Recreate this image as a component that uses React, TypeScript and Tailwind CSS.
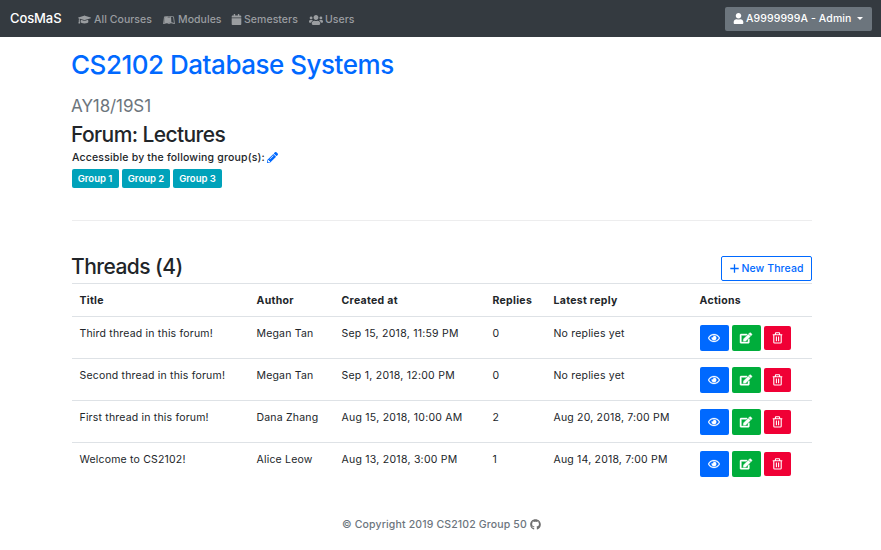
import React from "react";
import { FaGraduationCap, FaLeanpub, FaCalendar, FaUsers, FaUser, FaPencilAlt, FaRegEye, FaEdit, FaGithub } from "react-icons/fa";

const threads = [
  ["Third thread in this forum!", "Megan Tan", "Sep 15, 2018, 11:59 PM", "0", "No replies yet"],
  ["Second thread in this forum!", "Megan Tan", "Sep 1, 2018, 12:00 PM", "0", "No replies yet"],
  ["First thread in this forum!", "Dana Zhang", "Aug 15, 2018, 10:00 AM", "2", "Aug 20, 2018, 7:00 PM"],
  ["Welcome to CS2102!", "Alice Leow", "Aug 13, 2018, 3:00 PM", "1", "Aug 14, 2018, 7:00 PM"],
];

const columns = "grid grid-cols-[177px_85px_151px_61px_146px_112px]";

function TrashIcon() {
  return (
    <svg width="11" height="12" viewBox="0 0 11 12" fill="none" stroke="currentColor" strokeWidth="1.1">
      <path d="M0.7 2.7H10.3M3.4 2.5V1.4Q3.4 0.8 4 0.8H7Q7.6 0.8 7.6 1.4V2.5M1.8 2.7V10.2Q1.8 11 2.6 11H8.4Q9.2 11 9.2 10.2V2.7M4.4 4.6V9.2M6.6 4.6V9.2" />
    </svg>
  );
}

function PlusIcon() {
  return (
    <svg width="9" height="9" viewBox="0 0 9 9" fill="none" stroke="currentColor" strokeWidth="1.3">
      <path d="M4.5 0.3V8.7M0.3 4.5H8.7" />
    </svg>
  );
}

export default function App() {
  return (
    <div className="h-[550px] overflow-hidden bg-white font-['Inter',sans-serif] text-[10.5px] text-[#212529]">
      <nav className="flex h-[37px] items-center bg-[#343a40] pl-[10px] pr-[9px] font-medium text-[#9a9da0]">
        <span className="w-[68px] text-[13px] tracking-[-0.1px] text-white">CosMaS</span>
        <div className="flex flex-1 items-center pt-[2px] tracking-[0.05px]">
          <span className="flex w-[85px] items-center gap-[3px]"><FaGraduationCap size={13} />All Courses</span>
          <span className="flex w-[68px] items-center gap-[3px]"><FaLeanpub size={12} />Modules</span>
          <span className="flex w-[78px] items-center gap-[2px]"><FaCalendar size={11} />Semesters</span>
          <span className="flex items-center gap-[2px]"><FaUsers size={14} />Users</span>
        </div>
        <button className="flex h-6 w-[147px] items-center rounded-[2px] bg-[#6c757d] pl-2 text-white">
          <FaUser size={11} className="mr-[2px]" />
          <span className="tracking-[0.1px]">A9999999A - Admin</span>
          <span className="ml-[6px] border-x-[3.5px] border-t-[3.5px] border-x-transparent border-t-white" />
        </button>
      </nav>

      <main className="ml-[72px] w-[740px]">
        <h1 className="-ml-px h-[58px] pt-[9px] text-[26px] leading-[38px] font-medium tracking-[-0.48px] text-[#0069ff]">CS2102 Database Systems</h1>
        <div className="-ml-px h-[26px] text-[17px] leading-[22px] tracking-[-0.1px] text-[#6c757d]">AY18/19S1</div>
        <h2 className="-ml-px h-[28px] text-[21px] leading-[27px] font-medium tracking-[-0.6px]">Forum: Lectures</h2>
        <div className="mb-1 flex h-4 items-center font-medium tracking-[0.18px]"><span className="pt-px">Accessible by the following group(s):</span><FaPencilAlt size={11} className="ml-[2px] text-[#0069ff]" /></div>
        <div className="flex h-[19px] gap-[3px] text-[9.5px] font-semibold text-white">
          <span className="flex w-[47px] items-center justify-center rounded-[2px] bg-[#00a2ba] pt-px pr-px">Group 1</span>
          <span className="flex w-12 items-center justify-center rounded-[2px] bg-[#00a2ba] pt-px">Group 2</span>
          <span className="flex w-[49px] items-center justify-center rounded-[2px] bg-[#00a2ba] pt-px">Group 3</span>
        </div>
        <hr className="mt-8 border-t border-[#ededee]" />

        <section className="pt-[35px]">
          <div className="flex h-[27px] justify-between">
            <h2 className="-ml-px text-[21px] leading-[22px] font-medium tracking-[-0.55px]">Threads (4)</h2>
            <button className="flex h-[25px] w-[91px] items-center justify-center gap-[3px] rounded-[2px] border border-[#0069ff] font-medium tracking-[0.08px] text-[#0069ff]"><PlusIcon />New Thread</button>
          </div>
          <div className={`${columns} h-[33px] border-t border-[#dee2e6] pl-[7.5px] pt-2 leading-[17px] font-bold tracking-[0.3px]`}>
            {["Title", "Author", "Created at", "Replies", "Latest reply", "Actions"].map((name) => <span key={name}>{name}</span>)}
          </div>
          {threads.map((thread) => (
            <div key={thread[0]} className={`${columns} h-[42px] border-t border-[#dee2e6] pl-[7.5px] pt-2 leading-[17px] tracking-[0.19px]`}>
              {thread.map((cell, i) => <span key={i} className={i === 2 ? "tracking-[0.25px]" : ""}>{cell}</span>)}
              <span className="ml-[0.5px] flex h-[26px] items-center gap-[3px] text-white">
                <span className="flex h-[26px] w-[29px] items-center justify-center rounded-[2px] bg-[#0069ff] pr-px"><FaRegEye size={12} stroke="currentColor" strokeWidth={12} /></span>
                <span className="flex h-[26px] w-[29px] items-center justify-center rounded-[2px] bg-[#00ad3b] pr-px"><FaEdit size={12} stroke="currentColor" strokeWidth={20} className="overflow-visible" /></span>
                <span className="flex h-6 w-[27px] items-center justify-center rounded-[2px] bg-[#f00035] pb-px"><TrashIcon /></span>
              </span>
            </div>
          ))}
        </section>
      </main>
      <footer className="mt-[33px] flex items-center justify-center gap-[3px] pl-[2px] font-medium text-[#6c757d]">
        <span className="tracking-[0.15px]">© Copyright 2019 CS2102 Group 50</span><FaGithub size={11} className="text-[#6f6f6f]" />
      </footer>
    </div>
  );
}
